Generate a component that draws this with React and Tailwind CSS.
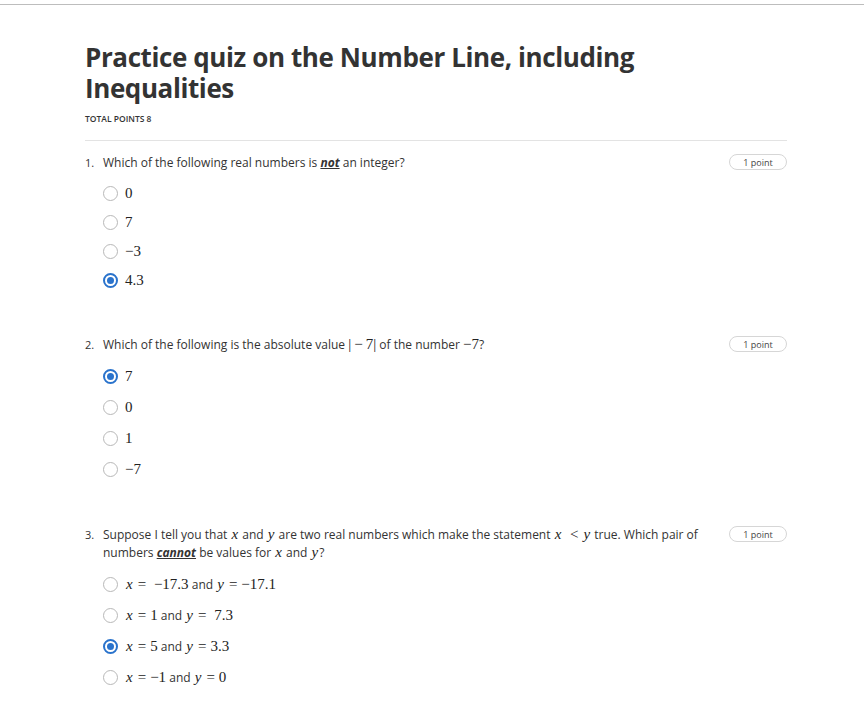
import React from 'react';

const M = ({ children }) => (
  <span className="font-['Liberation_Serif',serif] text-[15px] leading-none text-[#222]">{children}</span>
);
const I = ({ children }) => (
  <span className="font-['Liberation_Serif',serif] italic text-[15px] leading-none text-[#222] mx-[1px]">{children}</span>
);
// relation symbol with KaTeX-like spacing around it
const Rel = ({ children }) => (
  <span className="font-['Liberation_Serif',serif] text-[15px] leading-none text-[#222] mx-[4px]">{children}</span>
);

const Radio = ({ checked }) =>
  checked ? (
    <span className="w-[15px] h-[15px] rounded-full border-2 border-[#2a73cc] flex items-center justify-center shrink-0">
      <span className="w-[7px] h-[7px] rounded-full bg-[#2a73cc]" />
    </span>
  ) : (
    <span className="w-[15px] h-[15px] rounded-full border-[1.5px] border-[#b8b8b8] shrink-0" />
  );

const PointBadge = () => (
  <div className="shrink-0 ml-6 w-[58px] h-[16px] rounded-full border border-[#d6d6d6] flex items-center justify-center text-[9px] text-[#444] leading-none">
    1 point
  </div>
);

const Question = ({ num, text, options, rowH }) => (
  <div>
    <div className="flex items-start">
      <div className="w-[18px] shrink-0 text-[11px] leading-[18px] text-[#333]">{num}.</div>
      <div className="flex-1 text-[12px] leading-[18px] text-[#333]">{text}</div>
      <PointBadge />
    </div>
    <div className="mt-[7px] pl-[18px]">
      {options.map((o, i) => (
        <div key={i} className={`flex items-center gap-[7px] ${rowH}`}>
          <Radio checked={o.checked} />
          <div className="text-[12px] text-[#333] whitespace-nowrap">{o.label}</div>
        </div>
      ))}
    </div>
  </div>
);

const App = () => {
  const q1 = [
    { label: <M>0</M> },
    { label: <M>7</M> },
    { label: <M>−3</M> },
    { label: <M>4.3</M>, checked: true },
  ];
  const q2 = [
    { label: <M>7</M>, checked: true },
    { label: <M>0</M> },
    { label: <M>1</M> },
    { label: <M>−7</M> },
  ];
  const q3 = [
    { label: <><I>x</I><Rel>=</Rel><M>&nbsp;−17.3</M> and <I>y</I><Rel>=</Rel><M>−17.1</M></> },
    { label: <><I>x</I><Rel>=</Rel><M>1</M> and <I>y</I><Rel>=</Rel><M>&nbsp;7.3</M></> },
    { label: <><I>x</I><Rel>=</Rel><M>5</M> and <I>y</I><Rel>=</Rel><M>3.3</M></>, checked: true },
    { label: <><I>x</I><Rel>=</Rel><M>−1</M> and <I>y</I><Rel>=</Rel><M>0</M></> },
  ];

  return (
    <div className="min-h-screen bg-white font-['Open_Sans',sans-serif]">
      <div className="pt-[4px]">
        <div className="h-[1px] bg-[#bdbdbd]" />
      </div>
      <div className="ml-[85px] w-[702px] pt-[37px]">
        <h1 className="text-[26px] leading-[31px] font-bold tracking-[-0.4px] text-[#333]">
          Practice quiz on the Number Line, including Inequalities
        </h1>
        <div className="mt-[9px] text-[8.5px] leading-[12px] font-semibold text-[#333] uppercase">
          Total points 8
        </div>
        <div className="mt-[15px] h-[1px] bg-[#e3e3e3]" />
        <div className="pt-[13px] flex flex-col gap-[41px]">
          <Question
            num={1}
            text={<>Which of the following real numbers is <span className="font-bold italic underline">not</span> an integer?</>}
            options={q1}
            rowH="h-[29px]"
          />
          <Question
            num={2}
            text={<>Which of the following is the absolute value <M>|<span className="mx-[3px]">−</span>7|</M> of the number <M>−7</M>?</>}
            options={q2}
            rowH="h-[31px]"
          />
          <Question
            num={3}
            text={<>Suppose I tell you that <I>x</I> and <I>y</I> are two real numbers which make the statement <I>x</I><Rel>&nbsp;&lt;</Rel><I>y</I> true. Which pair of numbers <span className="font-bold italic underline">cannot</span> be values for <I>x</I> and <I>y</I>?</>}
            options={q3}
            rowH="h-[31px]"
          />
        </div>
      </div>
    </div>
  );
};

export default App;
